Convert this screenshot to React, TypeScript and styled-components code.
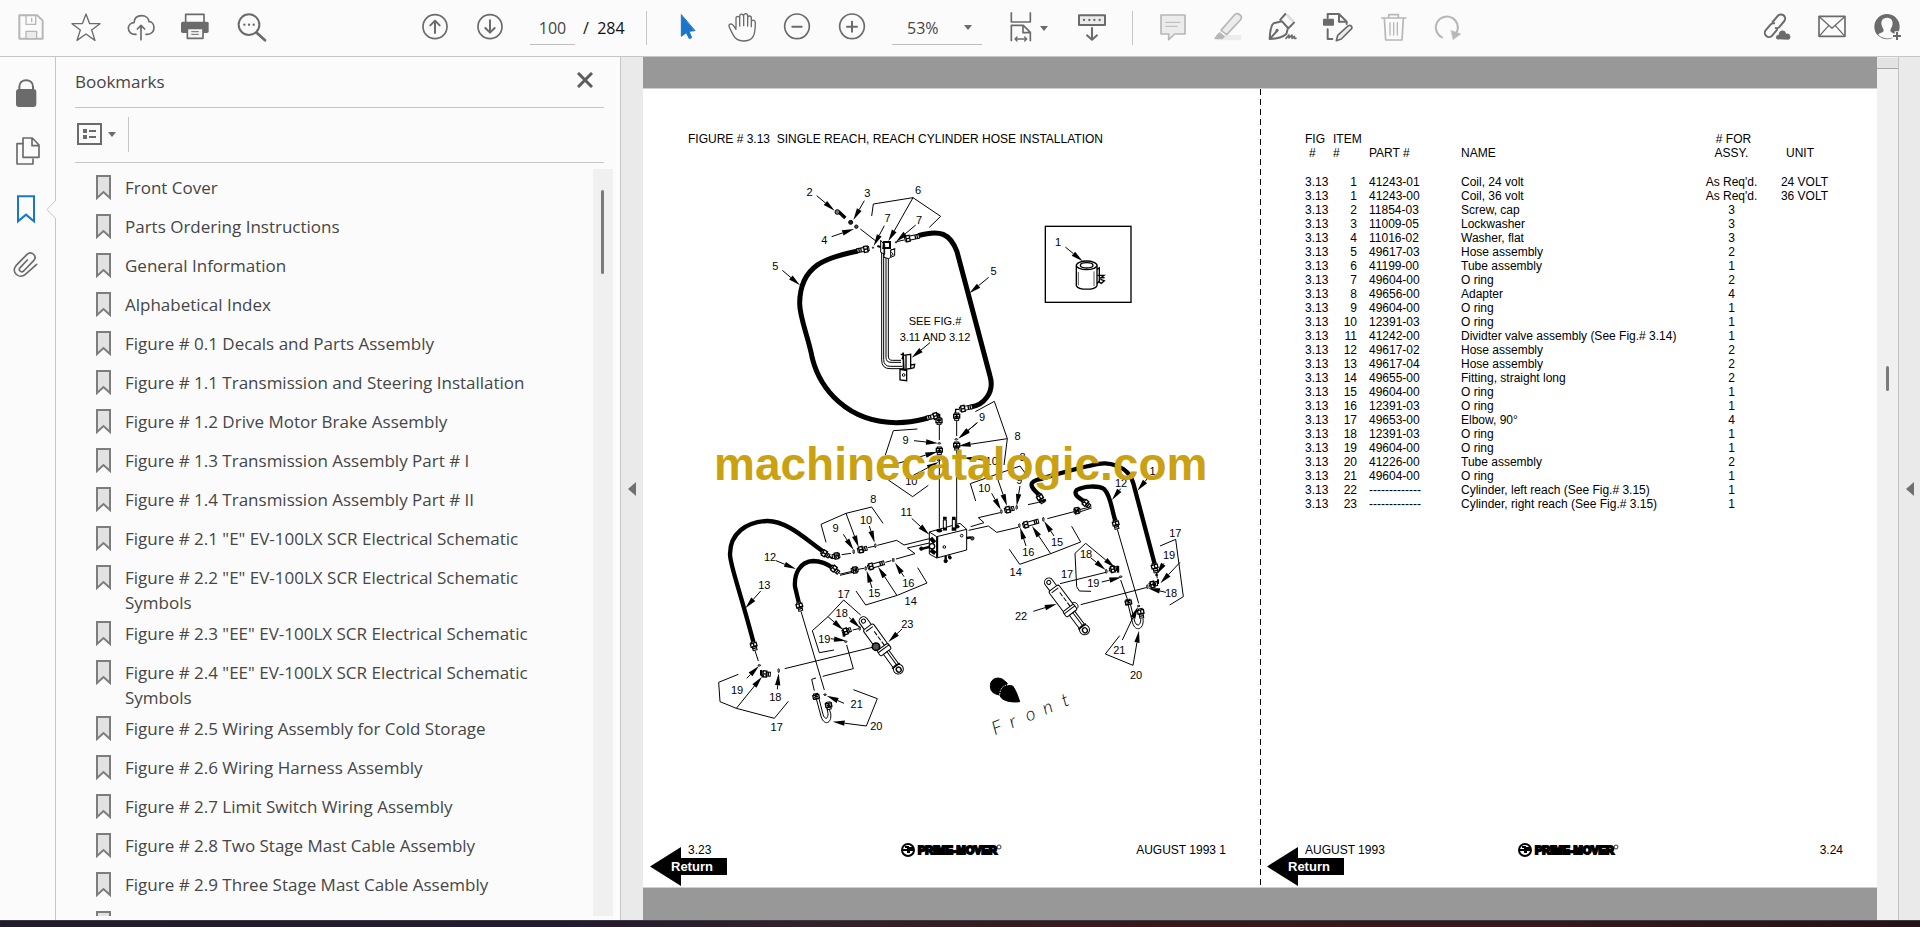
import React from "react";
import styled, { createGlobalStyle, css } from "styled-components";

const UI_FONT = '"Open Sans", "Noto Sans", sans-serif';
const PAGE_FONT = '"Liberation Sans", Arial, sans-serif';
const INK = "#6b6b6b";
const PALE = "#b7b7b7";
const BLUE = "#1b75c8";

const GlobalStyle = createGlobalStyle`
  * { box-sizing: border-box; }
  html, body, #root { height: 100%; }
  body { margin: 0; font-family: ${UI_FONT}; background: #fbfbfb; color: #464646; }
  button, input, select { font: inherit; color: inherit; }
`;

/* ---------- shell ---------- */

const Shell = styled.div`
  display: flex;
  flex-direction: column;
  height: 100vh;
  overflow: hidden;
`;

const Toolbar = styled.header`
  display: flex;
  align-items: center;
  flex: none;
  height: 57px;
  padding: 0 5px 0 4px;
  border-bottom: 1px solid #c6c6c6;
`;

const ToolGroup = styled.div<{ $before?: number; $push?: boolean }>`
  display: flex;
  align-items: center;
  margin-left: ${(p) => (p.$push ? "auto" : `${p.$before ?? 0}px`)};
`;

const IconButton = styled.button<{ $tone?: string; $tall?: boolean }>`
  display: flex;
  align-items: center;
  justify-content: center;
  width: 55px;
  height: ${(p) => (p.$tall ? 58 : 56)}px;
  padding: 0;
  border: 0;
  background: none;
  color: ${(p) => p.$tone ?? INK};
  svg {
    width: 31px;
    height: 30px;
    overflow: visible;
    fill: none;
    stroke: currentColor;
    stroke-width: 6;
    stroke-linecap: round;
    stroke-linejoin: round;
  }
`;

const Divider = styled.span<{ $h: number }>`
  width: 1px;
  height: ${(p) => p.$h}px;
  background: #c6c6c6;
`;

const fieldLook = css`
  height: 34px;
  border: 0;
  border-bottom: 1px solid #c0c0c0;
  border-radius: 0;
  background: transparent;
  font-size: 16px;
  outline: 0;
`;

const PageInput = styled.input`
  ${fieldLook}
  width: 45px;
  margin-left: 12px;
  padding: 0;
  text-align: center;
`;

const PageTotal = styled.span`
  width: 50px;
  margin: 0 13px 0 8px;
  font-size: 16px;
  color: #111;
  white-space: pre;
`;

const ZoomField = styled.label`
  display: flex;
  position: relative;
  width: 90px;
  margin-left: 12px;
`;

const ZoomSelect = styled.select`
  ${fieldLook}
  width: 100%;
  padding: 0 0 0 15px;
  appearance: none;
`;

const Caret = styled.span<{ $over?: boolean }>`
  border: 4px solid transparent;
  border-top: 5px solid ${INK};
  border-bottom: 0;
  ${(p) => p.$over && css`position: absolute; right: 10px; top: 14px;`}
`;

const FitButton = styled(IconButton)`
  width: 71px;
  gap: 8px;
  justify-content: flex-start;
  padding-left: 28px;
  svg { width: 22px; }
`;

const Body = styled.div`
  display: flex;
  flex: 1;
  min-height: 0;
`;

const DesktopEdge = styled.div`
  flex: none;
  height: 7px;
  border-top: 1px solid #3a3a40;
  background: linear-gradient(90deg, #211c2b 0%, #241a30 30%, #33222a 42%, #3a181a 60%, #38181b 80%, #241216 100%);
`;

/* ---------- navigation ---------- */

const Rail = styled.nav`
  position: relative;
  flex: none;
  width: 56px;
  padding-top: 7px;
  border-right: 1px solid #c6c6c6;
`;

const Notch = styled.svg`
  position: absolute;
  right: -1px;
  top: 143px;
  width: 10px;
  height: 19px;
`;

const Panel = styled.aside`
  display: flex;
  flex-direction: column;
  flex: none;
  width: 565px;
  border-right: 1px solid #c6c6c6;
`;

const PanelHead = styled.div`
  display: flex;
  justify-content: space-between;
  align-items: center;
  flex: none;
  height: 51px;
  margin: 0 16px 0 19px;
  padding: 0 11px 2px 0;
  border-bottom: 1px solid #c6c6c6;
`;

const PanelTitle = styled.h2`
  margin: 0;
  font-size: 17px;
  font-weight: 400;
`;

const CloseButton = styled.button`
  display: flex;
  padding: 0 0 2px;
  border: 0;
  background: none;
  color: #5c5c5c;
`;

const PanelTools = styled.div`
  display: flex;
  align-items: center;
  flex: none;
  height: 55px;
  margin: 0 16px 0 19px;
  padding-bottom: 2px;
  border-bottom: 1px solid #c6c6c6;
`;

const OptionsButton = styled.button`
  display: flex;
  align-items: center;
  gap: 6px;
  width: 53px;
  padding: 0 0 0 2px;
  border: 0;
  background: none;
  color: ${INK};
`;

const ListArea = styled.div`
  display: flex;
  flex: 1;
  min-height: 0;
  margin: 6px 7px 4px 40px;
`;

const BookmarkList = styled.ul`
  flex: 1;
  margin: 0;
  padding: 3px 20px 0 0;
  overflow: hidden;
  list-style: none;
`;

const BookmarkRow = styled.li`
  min-height: 39px;
  padding: 3px 0;
`;

const BookmarkLink = styled.a`
  display: flex;
  gap: 14px;
  color: inherit;
  font-size: 17px;
  line-height: 25px;
  text-decoration: none;
  svg { flex: none; width: 15px; height: 25px; }
`;

const Track = styled.div`
  flex: none;
  width: 20px;
  padding: 21px 8px;
  background: #f0f0f0;
`;

const Thumb = styled.div<{ $h: number }>`
  width: 3px;
  height: ${(p) => p.$h}px;
  border-radius: 2px;
  background: #7b7b7b;
`;

const Splitter = styled.button<{ $w: number }>`
  display: flex;
  align-items: center;
  justify-content: center;
  flex: none;
  width: ${(p) => p.$w}px;
  padding: 0;
  border: 0;
  background: #eaeaea;
`;

const LeftCaret = styled.span`
  border: 7px solid transparent;
  border-right: 8px solid #707070;
  border-left: 0;
`;

/* ---------- document ---------- */

const Viewer = styled.main`
  display: flex;
  flex: 1;
  min-width: 0;
  padding: 31px 0 32px;
  background: #989898;
`;

const Sheet = styled.section<{ $cut?: boolean }>`
  position: relative;
  display: flex;
  flex-direction: column;
  flex: 1;
  min-width: 0;
  padding-top: 43px;
  border-top: 1px solid #cfcfcf;
  border-bottom: 1px solid #cfcfcf;
  background: #fff;
  color: #000;
  font-family: ${PAGE_FONT};
  font-size: 12px;
  line-height: 14px;
  ${(p) => p.$cut && css`
    &::before {
      content: "";
      position: absolute;
      left: 0;
      top: 0;
      bottom: 0;
      width: 1px;
      background: repeating-linear-gradient(#000 0 6px, transparent 6px 10px);
    }
  `}
`;

const FigureTitle = styled.h1`
  margin: 0 0 0 45px;
  font-size: 12px;
  font-weight: 400;
  line-height: 14px;
  white-space: pre;
`;

const FigureArea = styled.div`
  position: relative;
`;

const Drawing = styled.svg`
  display: block;
  width: 100%;
  fill: none;
  stroke: #000;
  stroke-width: 3;
  text {
    fill: #000;
    stroke: none;
    font-family: ${PAGE_FONT};
    font-size: 33px;
    text-anchor: middle;
  }
`;

const Watermark = styled.div`
  position: absolute;
  left: 71px;
  top: 295px;
  color: #c9a111;
  font-size: 46px;
  font-weight: 700;
  line-height: 46px;
  white-space: nowrap;
`;

const PartsTable = styled.table`
  width: calc(100% - 76px);
  margin-left: 45px;
  border-collapse: collapse;
  table-layout: fixed;
  tbody::before { content: ""; display: block; height: 15px; }
  th, td { padding: 0; font-weight: 400; text-align: left; white-space: nowrap; }
`;

const Cell = styled.td<{ $align?: string; $pad?: number }>`
  &&& { text-align: ${(p) => p.$align ?? "left"}; padding-left: ${(p) => p.$pad ?? 0}px; }
`;

const HeadCell = styled.th<{ $align?: string; $pad?: number }>`
  &&& { text-align: ${(p) => p.$align ?? "left"}; padding-left: ${(p) => p.$pad ?? 0}px; }
`;

const SheetFoot = styled.footer`
  display: grid;
  grid-template-columns: 1fr auto 1fr;
  align-items: center;
  margin-top: auto;
  padding: 0 34px 29px;
  line-height: 16px;
  > :first-child { margin-left: 11px; }
  > :last-child { text-align: right; }
`;

const LogoMark = styled.svg`
  width: 101px;
  height: 16px;
`;

const ReturnLink = styled.a`
  position: absolute;
  left: 7px;
  bottom: 1px;
  display: flex;
  align-items: center;
  width: 77px;
  height: 39px;
  padding-left: 21px;
  background: #000;
  clip-path: polygon(0 50%, 31px 0, 31px 11px, 100% 11px, 100% 28px, 31px 28px, 31px 100%);
  color: #fff;
  font-size: 13px;
  font-weight: 700;
  text-decoration: none;
`;

const PageScroll = styled.div`
  display: flex;
  flex-direction: column;
  align-items: center;
  flex: none;
  width: 22px;
  border-right: 1px solid #c2c2c2;
  background: #f0f0f0;
  &::before {
    content: "";
    width: 100%;
    height: 10px;
    margin: 1px 0 297px;
    border-bottom: 1px solid #a8a8a8;
    background: #e3e3e3;
  }
`;

/* ---------- data ---------- */

const bookmarks = [
  "Front Cover",
  "Parts Ordering Instructions",
  "General Information",
  "Alphabetical Index",
  "Figure # 0.1 Decals and Parts Assembly",
  "Figure # 1.1 Transmission and Steering Installation",
  "Figure # 1.2 Drive Motor Brake Assembly",
  "Figure # 1.3 Transmission Assembly Part # I",
  "Figure # 1.4 Transmission Assembly Part # II",
  'Figure # 2.1 "E" EV-100LX SCR Electrical Schematic',
  'Figure # 2.2 "E" EV-100LX SCR Electrical Schematic Symbols',
  'Figure # 2.3 "EE" EV-100LX SCR Electrical Schematic',
  'Figure # 2.4 "EE" EV-100LX SCR Electrical Schematic Symbols',
  "Figure # 2.5 Wiring Assembly for Cold Storage",
  "Figure # 2.6 Wiring Harness Assembly",
  "Figure # 2.7 Limit Switch Wiring Assembly",
  "Figure # 2.8 Two Stage Mast Cable Assembly",
  "Figure # 2.9 Three Stage Mast Cable Assembly",
  "",
];

const parts: [string, string, string, string, string?][] = [
  ["1", "41243-01", "Coil, 24 volt", "As Req'd.", "24 VOLT"],
  ["1", "41243-00", "Coil, 36 volt", "As Req'd.", "36 VOLT"],
  ["2", "11854-03", "Screw, cap", "3"],
  ["3", "11009-05", "Lockwasher", "3"],
  ["4", "11016-02", "Washer, flat", "3"],
  ["5", "49617-03", "Hose assembly", "2"],
  ["6", "41199-00", "Tube assembly", "1"],
  ["7", "49604-00", "O ring", "2"],
  ["8", "49656-00", "Adapter", "4"],
  ["9", "49604-00", "O ring", "1"],
  ["10", "12391-03", "O ring", "1"],
  ["11", "41242-00", "Dividter valve assembly (See Fig.# 3.14)", "1"],
  ["12", "49617-02", "Hose assembly", "2"],
  ["13", "49617-04", "Hose assembly", "2"],
  ["14", "49655-00", "Fitting, straight long", "2"],
  ["15", "49604-00", "O ring", "1"],
  ["16", "12391-03", "O ring", "1"],
  ["17", "49653-00", "Elbow, 90°", "4"],
  ["18", "12391-03", "O ring", "1"],
  ["19", "49604-00", "O ring", "1"],
  ["20", "41226-00", "Tube assembly", "2"],
  ["21", "49604-00", "O ring", "1"],
  ["22", "-------------", "Cylinder, left reach (See Fig.# 3.15)", "1"],
  ["23", "-------------", "Cylinder, right reach (See Fig.# 3.15)", "1"],
];

/* ---------- drawing pieces ---------- */

type Label = [string, number, number];
type Pointer = [number, number, number, number];

const Labels = ({ items }: { items: Label[] }) => (
  <>
    {items.map(([t, x, y]) => (
      <text key={`${t}-${x}-${y}`} x={x} y={y + 12}>{t}</text>
    ))}
  </>
);

const Pointers = ({ items }: { items: Pointer[] }) => (
  <>
    {items.map(([x1, y1, x2, y2]) => {
      const len = Math.hypot(x2 - x1, y2 - y1);
      const ux = (x2 - x1) / len;
      const uy = (y2 - y1) / len;
      const bx = x2 - ux * 36;
      const by = y2 - uy * 36;
      return (
        <g key={`${x1}-${y1}-${x2}`}>
          <path d={`M${x1} ${y1}L${bx} ${by}`} />
          <path d={`M${x2} ${y2}L${bx - uy * 8} ${by + ux * 8}L${bx + uy * 8} ${by - ux * 8}z`} fill="#000" stroke="none" />
        </g>
      );
    })}
  </>
);

const Leads = ({ items }: { items: string[] }) => (
  <>{items.map((p) => <polyline key={p} points={p} />)}</>
);

const Fitting = ({ x, y, a, l = 36 }: { x: number; y: number; a: number; l?: number }) => (
  <g transform={`translate(${x} ${y}) rotate(${a})`} fill="#fff">
    <rect x={-l / 2} y={-6} width={l} height={12} />
    <rect x={-l / 2 + 4} y={-9} width={11} height={18} strokeWidth="4" />
    <path d={`M${-l / 2 + 4} 0h11M${l / 2 - 12} -6v12M${l / 2 - 6} -6v12`} strokeWidth="4" />
  </g>
);

const Cylinder = ({ x, y, a }: { x: number; y: number; a: number }) => (
  <g transform={`translate(${x} ${y}) rotate(${a})`} fill="#fff">
    <path d="M28 -13H4a13 13 0 0 0 0 26h24" />
    <circle cx="4" cy="0" r="6" />
    <rect x="26" y="-19" width="92" height="37" rx="6" />
    <path d="M34 -13v25" />
    <path d="M48 -8h52" strokeDasharray="14 5" />
    <rect x="100" y="-20" width="20" height="40" rx="5" />
    <path d="M107 -20v40" />
    <rect x="120" y="-10" width="52" height="20" />
    <path d="M120 -3h50" />
    <circle cx="182" cy="0" r="15" />
    <ellipse cx="184" cy="0" rx="8" ry="7" strokeWidth="4" />
    <path d="M170 -14v28" strokeWidth="5" />
  </g>
);

const HoseDrawing = () => (
  <Drawing viewBox="-171 -72 1851 1800" role="img" aria-label="Reach cylinder hose installation">
    {/* upper hose loop and coil inset */}
    <g>
      <path d="M474 243C380 262 300 285 299 400C299 445 325 500 337 565C360 655 440 757 590 758C635 758 660 750 684 744M655 197C720 178 750 190 771 245L870 618C885 668 850 706 812 711" strokeWidth="15" />
      <path d="M545 240V570q0 26 25 26h40M551 240V568q0 21 20 21h36M558 262V562q0 15 15 15h30M565 262V558q0 13 12 13h26" />
      <path d="M542 211v36l12 6v-28zM552 236v26l14 4 6-4v-22l12-3v20l-12 5M572 240l14-4M574 247l6 5-6 6" fill="#fff" />
      <path d="M552 216h18v18h-20zM532 228l10 3" strokeWidth="6" />
      <path d="M600 598v32l20 2v-30zM606 556l4-8v50M610 556l22-3v42l-20 4zM618 556v42M602 552l8 4-4 12M632 585l12-2-2 10-10 3" fill="#fff" strokeWidth="4" />
      <circle cx="611" cy="615" r="4" />
      <Fitting x={489} y={239} a={170} />
      <Fitting x={636} y={203} a={-12} l={44} />
      <Fitting x={698} y={740} a={166} />
      <Fitting x={798} y={714} a={-12} l={38} />
      <path d="M712 733h7v14M766 736l1-18h10" strokeWidth="4" />
      <Fitting x={717} y={753} a={90} l={20} />
      <Fitting x={770} y={740} a={90} l={22} />
      <path d="M416 125l20 19" strokeWidth="10" />
      <circle cx="412" cy="126" r="7" fill="#777" />
      <circle cx="452" cy="157" r="6" fill="#222" />
      <circle cx="469" cy="170" r="5" fill="#555" />
      <circle cx="519" cy="233" r="2" />
      <circle cx="588" cy="217" r="2" />
      <rect x="1036" y="169" width="257" height="228" strokeWidth="4" />
      <path d="M1184 302l14-8v40l-14 14zM1192 316h20l-10 8 12-1M1194 334l10 6 9-8-12-4" fill="#fff" strokeWidth="4" />
      <path d="M1129 287v60c6 14 56 14 62 0v-60" fill="#fff" strokeWidth="4" />
      <ellipse cx="1160" cy="286" rx="31" ry="13" fill="#fff" strokeWidth="4" />
      <ellipse cx="1160" cy="286" rx="19" ry="8" strokeWidth="4" />
      <path d="M1135 306v40M1182 304v44" strokeWidth="2" />
      <Leads items={["515,138 520,102 639,83 722,139 688,172", "481,177 530,215", "590,215 612,210"]} />
      <Pointers items={[
        [350, 77, 404, 122], [493, 92, 460, 150], [395, 200, 462, 177], [553, 167, 521, 228],
        [647, 165, 588, 215], [639, 83, 565, 214], [247, 301, 300, 346], [866, 322, 808, 370],
        [1096, 231, 1148, 274], [690, 518, 635, 563], [832, 758, 775, 806],
      ]} />
      <Labels items={[
        ["2", 329, 65], ["3", 502, 69], ["6", 654, 59], ["7", 563, 145], ["7", 657, 149], ["4", 373, 211],
        ["5", 226, 287], ["5", 881, 303], ["1", 1074, 217], ["9", 846, 742], ["9", 617, 809], ["8", 953, 799],
        ["SEE FIG.#", 705, 454], ["3.11 AND 3.12", 705, 500],
      ]} />
    </g>
    {/* valve block, lower hoses and cylinders */}
    <g transform="translate(0 690)">
      <path d="M378 460C330 430 265 361 200 363C140 365 90 400 90 462C90 495 112 545 160 725M402 506C380 490 360 483 340 483C300 485 282 520 285 560L296 606M1022 288C1000 270 980 250 1010 240C1080 220 1180 189 1215 190C1260 193 1290 215 1300 250L1364 492M1158 308C1140 295 1118 285 1130 270C1150 258 1195 255 1213 268C1232 285 1235 330 1246 362" strokeWidth="13" />
      <Fitting x={376} y={462} a={32} l={26} />
      <path d="M385 468l10 6 10-4" strokeWidth="6" />
      <Fitting x={408} y={468} a={170} l={22} />
      <Fitting x={405} y={509} a={42} l={28} />
      <path d="M414 516l8 6 34-8M420 526l38-9" />
      <Fitting x={464} y={510} a={170} l={20} />
      <Fitting x={162} y={738} a={74} l={26} />
      <Fitting x={299} y={620} a={74} l={26} />
      <Fitting x={1022} y={296} a={60} l={28} />
      <path d="M1016 306l22-6" strokeWidth="7" />
      <Fitting x={1159} y={311} a={42} l={26} />
      <path d="M1134 330l40-10M1138 336l37-12" />
      <Fitting x={1131} y={332} a={170} l={18} />
      <Fitting x={1248} y={374} a={76} l={26} />
      <Fitting x={1365} y={504} a={76} l={28} />
      <Fitting x={487} y={448} a={-14} l={28} />
      <Fitting x={528} y={495} a={-16} l={50} />
      <Fitting x={928} y={328} a={-14} l={28} />
      <Fitting x={992} y={370} a={-16} l={48} />
      <Fitting x={718} y={152} a={90} l={22} />
      <Fitting x={770} y={138} a={90} l={24} />
      <Fitting x={440} y={693} a={-20} l={26} />
      <path d="M432 696v14" strokeWidth="8" />
      <Fitting x={198} y={822} a={4} l={26} />
      <path d="M183 810v14l8 6" strokeWidth="6" />
      <Fitting x={1242} y={507} a={-14} l={26} />
      <path d="M1254 498v20" strokeWidth="7" />
      <Fitting x={1360} y={553} a={-14} l={24} />
      <path d="M1374 538v14" strokeWidth="6" />
      {[[461, 455], [526, 437], [497, 505], [580, 480], [904, 335], [950, 322], [958, 377], [1030, 358], [236, 812], [479, 685], [1219, 514], [1342, 560]].map(([x, y]) => (
        <ellipse key={`${x}-${y}`} cx={x} cy={y} rx="2" ry="6" />
      ))}
      {[[718, 130], [769, 118], [178, 796], [437, 725], [375, 884], [1262, 530], [1370, 525], [1316, 618], [716, 181]].map(([x, y]) => (
        <ellipse key={`${x}-${y}`} cx={x} cy={y} rx="4" ry="2" />
      ))}
      <Leads items={[
        "378,427 363,373 438,340 515,321 549,370", "425,464 453,460", "503,443 522,439",
        "532,436 590,421 612,435 688,416", "688,429 622,444 645,461 588,477", "474,508 492,505", "556,487 574,482",
        "468,573 497,615 592,586 681,549 653,503", "402,750 358,758 337,692 384,650 431,600 482,645",
        "440,735 460,806 368,829", "348,834 335,838 343,872", "254,806 525,740", "303,634 373,870", "165,752 175,783",
        "458,690 476,686", "115,823 56,847 60,905 109,925 223,955 265,904", "460,869 532,896 499,978",
        "652,87 580,92 556,165", "565,240 638,290 685,256", "718,75 718,120", "718,165 718,385", "770,62 770,108", "770,152 770,380",
        "826,35 883,4 922,116 912,195", "827,303 811,251 960,198 985,232", "812,380 852,368 835,353 900,338",
        "806,391 865,378 890,397 954,382", "984,314 1016,307", "1042,356 1122,335",
        "928,448 959,493 1052,461 1142,426 1115,379", "1252,388 1316,610",
        "1380,438 1427,418 1450,590 1409,615", "1142,614 1338,563", "1157,430 1125,460 1130,560 1138,573 1173,574",
        "1080,551 1218,517", "1262,540 1283,600", "1259,707 1216,762 1299,796", "1368,515 1372,535", "1226,513 1232,510",
      ]} />
      <path d="M348 893L362 945C370 980 397 972 392 940L387 925M356 892L369 943C374 960 385 958 384 940L381 925" />
      <Fitting x={348} y={889} a={78} l={16} />
      <Fitting x={386} y={917} a={80} l={22} />
      <path d="M1284 612L1296 662C1303 700 1334 690 1329 655M1291 612L1303 660C1308 683 1324 678 1322 655" />
      <Fitting x={1285} y={606} a={78} l={16} />
      <Fitting x={1323} y={640} a={80} l={28} />
      <Cylinder x={488} y={660} a={54} />
      <circle cx="528" cy="740" r="11" fill="#555" strokeWidth="5" />
      <path d="M1112 616c4-16 24-8 22 6l-8 8" fill="#fff" />
      <Cylinder x={1044} y={544} a={53} />
      <path d="M688 396L780 370L800 388V450L710 474L688 462z" fill="#fff" />
      <path d="M688 396L710 410L800 388M710 410V474" />
      <path d="M712 410v62" strokeWidth="5" />
      <circle cx="733" cy="441" r="4" />
      <circle cx="785" cy="407" r="4" />
      <ellipse cx="718" cy="392" rx="8" ry="4" fill="#000" />
      <ellipse cx="770" cy="380" rx="8" ry="4" fill="#000" />
      <path d="M730 386v-26h9v26zM757 384v-26h9v26z" fill="#fff" />
      <path d="M729 355h11M756 355h11M729 387h12M755 388h14" strokeWidth="9" />
      <path d="M692 414l12 14M692 450l14 10" strokeWidth="12" />
      <circle cx="696" cy="439" r="8" fill="#fff" strokeWidth="4" />
      <path d="M668 446l20-5M800 414l14-2M737 478v-10M748 474v-8" strokeWidth="7" />
      <circle cx="664" cy="446" r="5" fill="#000" />
      <circle cx="817" cy="415" r="5" fill="#555" />
      <circle cx="737" cy="483" r="5" fill="#000" />
      <circle cx="750" cy="473" r="4" fill="#000" />
      <Pointers items={[
        [438, 340, 476, 442], [430, 403, 461, 450], [508, 378, 524, 428], [228, 482, 288, 507], [182, 573, 136, 625],
        [635, 355, 688, 404], [516, 564, 500, 512], [612, 530, 585, 488], [590, 585, 534, 500], [384, 650, 430, 690],
        [447, 652, 480, 683], [606, 687, 565, 726], [392, 716, 438, 722], [140, 835, 177, 798], [232, 868, 236, 820],
        [109, 925, 186, 830], [432, 910, 380, 887], [499, 978, 398, 965], [642, 122, 714, 130], [560, 200, 712, 155],
        [640, 226, 716, 186], [922, 116, 776, 138], [866, 182, 792, 173], [875, 280, 903, 330], [890, 228, 921, 318],
        [960, 258, 950, 318], [978, 438, 960, 382], [1062, 408, 1032, 363], [1052, 461, 996, 378], [1262, 266, 1236, 300],
        [1342, 236, 1312, 272], [1392, 490, 1370, 523], [1440, 487, 1381, 550], [1398, 577, 1344, 565],
        [1173, 474, 1217, 510], [1157, 430, 1245, 503], [1205, 546, 1264, 532], [1000, 634, 1070, 612],
        [1267, 720, 1314, 620], [1299, 796, 1317, 692], [832, 68, 777, 114],
      ]} />
      <Labels items={[
        ["9", 407, 385], ["10", 498, 359], ["8", 520, 297], ["12", 210, 470], ["13", 193, 554], ["11", 619, 336],
        ["15", 523, 580], ["16", 625, 548], ["14", 632, 603], ["17", 431, 583], ["18", 425, 638], ["23", 622, 671],
        ["19", 373, 716], ["19", 111, 869], ["18", 226, 890], ["17", 230, 981], ["21", 470, 912], ["20", 529, 979],
        ["10", 634, 243], ["8", 508, 232], ["10", 875, 184], ["10", 853, 264], ["9", 958, 240], ["8", 968, 170],
        ["16", 985, 456], ["15", 1071, 426], ["14", 947, 517], ["12", 1263, 250], ["1", 1358, 212], ["17", 1426, 398],
        ["19", 1407, 465], ["18", 1413, 579], ["18", 1158, 463], ["19", 1180, 549], ["17", 1101, 523], ["22", 963, 648],
        ["21", 1258, 750], ["20", 1308, 826],
      ]} />
      <path d="M872 866C866 838 890 828 908 838L922 850L905 886C888 884 874 878 872 866z" fill="#000" />
      <path d="M901 888C900 862 920 852 938 858C946 868 954 888 959 905C940 908 905 904 901 888z" fill="#000" />
      <path d="M899 884c1-18 10-28 26-30" stroke="#fff" strokeDasharray="4 4" />
      <text transform="translate(884 1006) rotate(-22)" x="0 56 108 164 226" y="0" style={{ fontSize: 56, fontStyle: "italic", fontFamily: "Lato, sans-serif", fontWeight: 300, textAnchor: "start" }}>Front</text>
    </g>
  </Drawing>
);

const Logo = () => (
  <LogoMark viewBox="0 0 101 16" role="img" aria-label="Prime-Mover">
    <circle cx="7" cy="8" r="6" fill="#fff" stroke="#000" strokeWidth="2" />
    <path d="M2 8h10M4 5h3v6M8 11V6h3v3" stroke="#000" strokeWidth="2" fill="none" />
    <text x="17" y="12" fill="#000" stroke="#000" strokeWidth="2" fontFamily="Liberation Sans" fontWeight="700" fontSize="11">PRIME-MOVER</text>
    <circle cx="98" cy="5" r="2" fill="none" stroke="#333" />
  </LogoMark>
);

const BookmarkGlyph = () => (
  <svg viewBox="0 0 15 25" aria-hidden="true">
    <path d="M1 1h13v22l-6.500-6L1 23z" fill="#e2e2e2" stroke="#7d7d7d" strokeWidth="2" />
  </svg>
);

const Tool = ({ label, box, tone, tall, children }: { label: string; box: string; tone?: string; tall?: boolean; children: React.ReactNode }) => (
  <IconButton type="button" aria-label={label} title={label} $tone={tone} $tall={tall}>
    <svg viewBox={`${box} 93 90`}>{children}</svg>
  </IconButton>
);

/* ---------- page ---------- */

export default function App() {
  return (
    <Shell>
      <GlobalStyle />
      <Toolbar>
        <ToolGroup>
          <Tool label="Save" box="48 39" tone={PALE}>
            <path d="M58 46h54l16 16v54H58z" />
            <path d="M78 94h32v22H78z" fill="#ececec" strokeWidth="4" />
            <path d="M78 46v27h29V46M95 55v10" strokeWidth="4" />
          </Tool>
          <Tool label="Star" box="213 39">
            <path d="M258 42l11 29h31l-25 19 10 31-27-19-27 19 10-31-25-19h31z" strokeWidth="4" />
          </Tool>
          <Tool label="Upload" box="378 39">
            <path d="M408 103c-14 1-23-7-23-18 0-10 8-17 17-17 1-14 11-21 23-21s21 7 22 18c9 0 15 8 15 18 0 12-9 20-20 20h-4M423 119V77M412 87l11-11 11 11" strokeWidth="5" />
          </Tool>
          <Tool label="Print" box="543 39">
            <path d="M557 66V43h55v23" strokeWidth="5" />
            <rect x="543" y="65" width="83" height="34" rx="5" fill="currentColor" stroke="none" />
            <path d="M562 85h47v30h-47z" fill="#f4f4f4" strokeWidth="5" />
            <path d="M575 95h20M575 103h20" strokeWidth="3" />
          </Tool>
          <Tool label="Find" box="708 39">
            <circle cx="747" cy="74" r="31" />
            <path d="M770 98l25 23" strokeWidth="8" />
            <path d="M733 74h.1M747 74h.1M761 74h.1" strokeWidth="7" />
          </Tool>
        </ToolGroup>
        <ToolGroup $before={129}>
          <Tool label="Previous page" box="0 0">
            <circle cx="45" cy="41" r="36" strokeWidth="5" />
            <path d="M45 60V24M31 37l14-14 14 14" />
          </Tool>
          <Tool label="Next page" box="0 0">
            <circle cx="45" cy="41" r="36" strokeWidth="5" />
            <path d="M45 22v36M31 45l14 14 14-14" />
          </Tool>
          <PageInput aria-label="Page number" defaultValue="100" />
          <PageTotal>/  284</PageTotal>
          <Divider $h={34} />
        </ToolGroup>
        <ToolGroup $before={13}>
          <Tool label="Select" box="96 39" tone={BLUE}>
            <path d="M124 45v64l15-11 9 18 7-3-8-19 17-2z" fill="currentColor" strokeWidth="3" />
          </Tool>
          <Tool label="Pan" box="261 39">
            <path d="M288 84V55c0-8 10-8 11 0v23M299 76V49c0-9 11-9 12 0v28M311 76V47c0-8 12-8 12 1v29M323 78V54c0-8 11-8 11 0v26M334 78V66c1-8 12-7 12 2 0 36-5 55-36 55-18 0-26-9-31-19l-11-22c-4-10 6-13 12-6l8 12" strokeWidth="4" />
          </Tool>
          <Tool label="Zoom out" box="426 39">
            <circle cx="471" cy="79" r="37" strokeWidth="5" />
            <path d="M457 80h28" />
          </Tool>
          <Tool label="Zoom in" box="591 39">
            <circle cx="636" cy="79" r="37" strokeWidth="5" />
            <path d="M621 80h30M636 65v30" />
          </Tool>
          <ZoomField>
            <ZoomSelect aria-label="Zoom level" defaultValue="53%">
              <option>53%</option>
              <option>100%</option>
            </ZoomSelect>
            <Caret $over />
          </ZoomField>
          <FitButton type="button" aria-label="Fit page">
            <svg viewBox="1112 39 66 90">
              <path d="M1116 37v29h57V37M1116 124V76h36l21 21v27M1151 78v20h21" strokeLinecap="butt" strokeWidth="5" />
              <path d="M1127 117h34M1133 111l-6 6 6 6M1156 111l6 6-6 6" strokeWidth="4" />
            </svg>
            <Caret />
          </FitButton>
        </ToolGroup>
        <ToolGroup $before={12}>
          <Tool label="Read mode" box="1311 39">
            <path d="M1317 46h78v29h-78z" fill="#ececec" />
            <path d="M1332 60h.1M1348 60h.1M1363 60h.1M1379 60h.1" strokeWidth="7" />
            <path d="M1356 84v34M1341 106l15 13 15-13" />
          </Tool>
        </ToolGroup>
        <ToolGroup $before={12}>
          <Divider $h={34} />
        </ToolGroup>
        <ToolGroup $before={13}>
          <Tool label="Comment" box="54 39" tone={PALE}>
            <path d="M63 45h72v57h-31l-18 17v-17H63z" fill="#ececec" strokeWidth="5" />
            <path d="M77 67h43M77 79h35" strokeWidth="3" />
          </Tool>
          <Tool label="Highlight" box="219 39" tone={PALE}>
            <path d="M238 105h66v16h-76z" fill="#ececec" stroke="none" />
            <path d="M243 91l40-46c5-5 12-4 17 0s5 10 1 15l-41 44z" fill="#ececec" strokeWidth="5" />
            <path d="M240 98l14 12-7 6H224l8-12z" fill="currentColor" strokeWidth="3" />
          </Tool>
          <Tool label="Sign" box="384 39">
            <path d="M436 44l22 24 6-6-20-20z" fill="#dcdcdc" stroke="none" />
            <path d="M389 117c1-24 3-40 12-47l25-6 18 20-5 18c-12 11-29 14-50 15zM391 115l20-22M421 59l15-17M446 84l16-16" />
            <path d="M411 91h.1" strokeWidth="9" />
            <path d="M438 115l9-10v9l9-9v10l7-6v6h5" strokeWidth="5" />
          </Tool>
          <Tool label="Edit" box="549 39">
            <rect x="549" y="56" width="33" height="21" rx="3" fill="currentColor" stroke="none" />
            <path d="M563 54V42h34l23 23v7M597 43v22h22M563 88v29h14" />
            <path d="M589 122l4-16 32-29c8-3 13 3 10 9l-31 31z" fill="#ececec" strokeWidth="5" />
          </Tool>
          <Tool label="Delete" box="714 39" tone={PALE}>
            <path d="M725 54h73M746 53v-9h29v9M733 55l4 65h49l4-65" strokeWidth="5" />
            <path d="M750 68v37M761 68v37M772 68v37" strokeWidth="4" />
          </Tool>
          <Tool label="Rotate" box="879 39" tone={PALE}>
            <path d="M906 112a33 33 0 1 1 43-13" />
            <path d="M934 92l28 10-22 16z" fill="currentColor" strokeWidth="2" />
          </Tool>
        </ToolGroup>
        <ToolGroup $push>
          <Tool label="Share link" box="0 0">
            <g transform="rotate(-50 38 40)">
              <path d="M44 27h24a12 12 0 0 1 0 25H46a12 12 0 0 1-10-6" />
              <path d="M35 52H12a12 12 0 0 1 0-25h22a12 12 0 0 1 10 6" />
            </g>
            <path d="M46 81c-8-1-9-15 2-17 2-17 23-18 26-4 14-2 18 18 6 22z" fill="currentColor" stroke="#fbfbfb" strokeWidth="4" />
          </Tool>
          <Tool label="Mail" box="0 0">
            <path d="M6 10h78v60H6z" strokeWidth="5" />
            <path d="M8 12l37 34 37-34M8 68l27-30M82 68L55 38" strokeWidth="4" />
          </Tool>
          <Tool label="Add people" box="0 0">
            <circle cx="45" cy="41" r="38" fill="currentColor" stroke="none" />
            <path d="M45 14c-14 0-19 11-16 23 2 8 6 10 6 17-2 5-13 6-16 11 14 14 36 16 52 2-3-7-14-8-16-13 0-7 4-9 6-17 3-12-2-23-16-23z" fill="#fbfbfb" stroke="none" />
            <path d="M75 55v28M61 69h28" stroke="#fbfbfb" strokeWidth="14" strokeLinecap="butt" />
            <path d="M75 57v24M63 69h24" strokeLinecap="butt" />
          </Tool>
        </ToolGroup>
      </Toolbar>

      <Body>
        <Rail aria-label="Navigation panes">
          <Tool tall label="Security" box="36 234">
            <rect x="48" y="267" width="61" height="54" rx="9" fill="currentColor" stroke="none" />
            <path d="M58 268v-8c0-26 41-26 41 0v8" />
          </Tool>
          <Tool tall label="Page thumbnails" box="36 408">
            <path d="M69 431H51v61h48v-15" strokeWidth="5" />
            <path d="M69 414h28l20 21v37H69zM96 415v22h20" strokeWidth="5" />
          </Tool>
          <Tool tall label="Bookmarks" box="36 582" tone={BLUE}>
            <path d="M54 589h48v75L78 644 54 664z" strokeLinejoin="miter" />
          </Tool>
          <Tool tall label="Attachments" box="36 757">
            <path d="M110 794l-34 30c-18 16-44-6-28-26l33-34c13-12 32 5 20 19l-30 31c-8 7-18-3-10-11l21-22" strokeWidth="5" />
          </Tool>
          <Notch viewBox="0 0 10 19" aria-hidden="true">
            <path d="M10 0L1 9.500L10 19" fill="#fbfbfb" stroke="#c6c6c6" />
          </Notch>
        </Rail>

        <Panel>
          <PanelHead>
            <PanelTitle>Bookmarks</PanelTitle>
            <CloseButton type="button" aria-label="Close bookmarks">
              <svg width="16" height="16" viewBox="0 0 16 16" stroke="currentColor" strokeWidth="3"><path d="M1 1l14 14M15 1L1 15" /></svg>
            </CloseButton>
          </PanelHead>
          <PanelTools>
            <OptionsButton type="button" aria-label="Bookmark options">
              <svg width="25" height="22" viewBox="0 0 25 22" fill="none" stroke="currentColor" strokeWidth="2">
                <path d="M1 1h23v20H1z" />
                <path d="M12 8h7M12 14h7" />
                <path d="M6 8h4M6 14h4" strokeWidth="4" />
              </svg>
              <Caret />
            </OptionsButton>
            <Divider $h={35} />
          </PanelTools>
          <ListArea>
            <BookmarkList>
              {bookmarks.map((name) => (
                <BookmarkRow key={name}>
                  <BookmarkLink href="#" aria-label={name || "Next bookmark"}>
                    <BookmarkGlyph />
                    <span>{name}</span>
                  </BookmarkLink>
                </BookmarkRow>
              ))}
            </BookmarkList>
            <Track><Thumb $h={84} /></Track>
          </ListArea>
        </Panel>
        <Splitter type="button" aria-label="Collapse left pane" $w={22}><LeftCaret /></Splitter>

        <Viewer>
          <Sheet>
            <FigureTitle>{"FIGURE # 3.13  SINGLE REACH, REACH CYLINDER HOSE INSTALLATION"}</FigureTitle>
            <FigureArea>
              <HoseDrawing />
              <Watermark>machinecatalogic.com</Watermark>
            </FigureArea>
            <SheetFoot>
              <span>3.23</span>
              <Logo />
              <span>AUGUST 1993 1</span>
            </SheetFoot>
            <ReturnLink href="#">Return</ReturnLink>
          </Sheet>
          <Sheet $cut>
            <PartsTable>
              <colgroup>
                <col style={{ width: 28 }} />
                <col style={{ width: 24 }} />
                <col style={{ width: 104 }} />
                <col />
                <col style={{ width: 63 }} />
                <col style={{ width: 83 }} />
              </colgroup>
              <thead>
                <tr>
                  <HeadCell>FIG</HeadCell>
                  <HeadCell>ITEM</HeadCell>
                  <HeadCell />
                  <HeadCell />
                  <HeadCell $align="center" $pad={4}># FOR</HeadCell>
                  <HeadCell />
                </tr>
                <tr>
                  <HeadCell $pad={4}>#</HeadCell>
                  <HeadCell>#</HeadCell>
                  <HeadCell $pad={12}>PART #</HeadCell>
                  <HeadCell>NAME</HeadCell>
                  <HeadCell $align="center">ASSY.</HeadCell>
                  <HeadCell $pad={23}>UNIT</HeadCell>
                </tr>
              </thead>
              <tbody>
                {parts.map(([item, part, name, qty, unit], i) => (
                  <tr key={i}>
                    <Cell>3.13</Cell>
                    <Cell $align="right">{item}</Cell>
                    <Cell $pad={12}>{part}</Cell>
                    <Cell>{name}</Cell>
                    <Cell $align="center">{qty}</Cell>
                    <Cell $align="center">{unit}</Cell>
                  </tr>
                ))}
              </tbody>
            </PartsTable>
            <SheetFoot>
              <span>AUGUST 1993</span>
              <Logo />
              <span>3.24</span>
            </SheetFoot>
            <ReturnLink href="#">Return</ReturnLink>
          </Sheet>
        </Viewer>
        <PageScroll><Thumb $h={25} /></PageScroll>
        <Splitter type="button" aria-label="Collapse right pane" $w={21}><LeftCaret /></Splitter>
      </Body>
      <DesktopEdge />
    </Shell>
  );
}
